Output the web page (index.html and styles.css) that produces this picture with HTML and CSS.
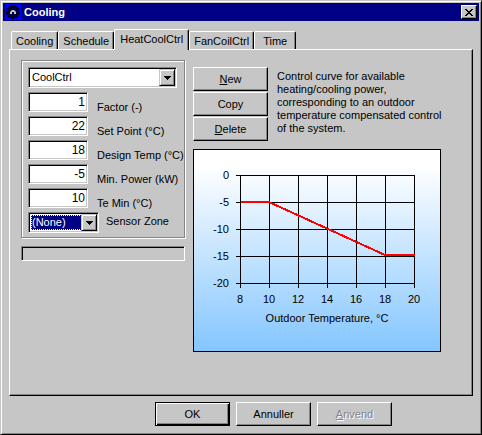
FILE: index.html
```
<!DOCTYPE html>
<html lang="en">
<head>
    <meta charset="UTF-8">
    <title>Cooling</title>
    <link rel="stylesheet" href="styles.css">
</head>

<body>
    <div class="window">
        <div class="title-bar">
            <svg class="app-icon" width="16" height="16" viewBox="0 0 16 16">
                <rect width="16" height="16" fill="#0000ff"/>
                <circle cx="8" cy="8" r="6" fill="#000042" stroke="#000000" stroke-width="2" stroke-dasharray="3 1"/>
                <path d="M5 10V8L7 6H9L11 8V10H9V8H7V10Z" fill="#c6c6c6"/>
            </svg>
            <h1>Cooling</h1>
            <button class="close" aria-label="Close">
                <svg width="8" height="7" viewBox="0 0 8 7" shape-rendering="crispEdges">
                    <path d="M0 0h2v1h1v1h2V1h1V0h2v1H7v1H6v1H5v1h1v1h1v1h1v1H6V6H5V5H3v1H2v1H0V6h1V5h1V4h1V3H2V2H1V1H0Z"/>
                </svg>
            </button>
        </div>

        <div class="tabs" role="tablist">
            <button class="tab" role="tab">Cooling</button>
            <button class="tab" role="tab">Schedule</button>
            <button class="tab active" role="tab" aria-selected="true">HeatCoolCtrl</button>
            <button class="tab" role="tab">FanCoilCtrl</button>
            <button class="tab" role="tab">Time</button>
        </div>

        <div class="panel" role="tabpanel">
            <div class="settings">
                <form class="group" onsubmit="event.preventDefault();">
                    <div class="combo">
                        <select id="controller" aria-label="Controller">
                            <option>CoolCtrl</option>
                        </select>
                        <span class="arrow"><svg width="7" height="4" viewBox="0 0 7 4" shape-rendering="crispEdges"><path d="M0 0h7v1H6v1H5v1H4v1H3V3H2V2H1V1H0Z"/></svg></span>
                    </div>
                    <div class="field">
                        <input type="text" id="factor" value="1">
                        <label for="factor">Factor (-)</label>
                    </div>
                    <div class="field">
                        <input type="text" id="set_point" value="22">
                        <label for="set_point">Set Point (°C)</label>
                    </div>
                    <div class="field">
                        <input type="text" id="design_temp" value="18">
                        <label for="design_temp">Design Temp (°C)</label>
                    </div>
                    <div class="field">
                        <input type="text" id="min_power" value="-5">
                        <label for="min_power">Min. Power (kW)</label>
                    </div>
                    <div class="field">
                        <input type="text" id="te_min" value="10">
                        <label for="te_min">Te Min (°C)</label>
                    </div>
                    <div class="sensor">
                        <div class="combo selected">
                            <select id="sensor_zone">
                                <option>(None)</option>
                            </select>
                            <span class="arrow"><svg width="7" height="4" viewBox="0 0 7 4" shape-rendering="crispEdges"><path d="M0 0h7v1H6v1H5v1H4v1H3V3H2V2H1V1H0Z"/></svg></span>
                        </div>
                        <label for="sensor_zone">Sensor Zone</label>
                    </div>
                </form>
                <div class="status"></div>
            </div>

            <div class="curve">
                <div class="top">
                    <div class="actions">
                        <button class="btn"><span><u>N</u>ew</span></button>
                        <button class="btn">Copy</button>
                        <button class="btn"><span><u>D</u>elete</span></button>
                    </div>
                    <p>Control curve for available<br>heating/cooling power,<br>corresponding to an outdoor<br>temperature compensated control<br>of the system.</p>
                </div>

                <svg class="chart" width="246" height="201" viewBox="0 0 246 201">
                    <!-- grid with tick marks -->
                    <g fill="none" stroke="#000000" shape-rendering="crispEdges">
                        <path d="M42 25.500H221M42 52.500H221M42 79.500H221M42 106.500H221M42 133.500H221"/>
                        <path d="M46.500 25V138M75.500 25V138M104.500 25V138M133.500 25V138M162.500 25V138M191.500 25V138M220.500 25V138"/>
                    </g>
                    <polyline points="47,52 75,52 191,105 221,105" fill="none" stroke="#ff0000" stroke-width="2" shape-rendering="crispEdges"/>
                    <g text-anchor="end">
                        <text x="35" y="29">0</text>
                        <text x="35" y="56">-5</text>
                        <text x="35" y="83">-10</text>
                        <text x="35" y="110">-15</text>
                        <text x="35" y="137">-20</text>
                    </g>
                    <g text-anchor="middle">
                        <text x="46" y="153">8</text>
                        <text x="75" y="153">10</text>
                        <text x="104" y="153">12</text>
                        <text x="133" y="153">14</text>
                        <text x="162" y="153">16</text>
                        <text x="191" y="153">18</text>
                        <text x="220" y="153">20</text>
                        <text x="133" y="172">Outdoor Temperature, °C</text>
                    </g>
                </svg>
            </div>
        </div>

        <div class="buttons">
            <button class="btn default">OK</button>
            <button class="btn">Annuller</button>
            <button class="btn" disabled><span><u>A</u>nvend</span></button>
        </div>
    </div>
</body>

</html>
```

FILE: styles.css
```
* {
    box-sizing: border-box;
}

body {
    margin: 0;
    font-family: "Liberation Sans", Arial, sans-serif;
    font-size: 11px;
    line-height: 13px;
    color: black;
    background-color: #c6c6c6;
}

button, input, select {
    font: inherit;
    color: inherit;
    margin: 0;
    border-radius: 0;
}

.window {
    display: flex;
    flex-direction: column;
    min-height: 100vh;
    padding: 2px;
    border: 1px solid;
    border-color: #c6c6c6 black black #c6c6c6;
    box-shadow: inset 1px 1px white, inset -1px -1px #848484;
}

/* Title bar */
.title-bar {
    display: flex;
    align-items: center;
    height: 18px;
    padding: 0 2px;
    background-color: #000084;
    color: white;
}

.title-bar h1 {
    flex: 1;
    margin: 0 3px;
    font-size: 11px;
    line-height: 16px;
}

.close {
    display: flex;
    align-items: center;
    justify-content: center;
    width: 16px;
    height: 14px;
    padding: 0;
    border: 1px solid;
    border-color: white black black white;
    background-color: #c6c6c6;
    box-shadow: inset -1px -1px #848484;
}

/* Tabs */
.tabs {
    display: flex;
    align-items: flex-end;
    height: 28px;
    padding-left: 8px;
}

.tab {
    min-width: 42px;
    height: 18px;
    padding: 1px 4px 0;
    border: 1px solid;
    border-color: white black transparent white;
    border-bottom: none;
    border-radius: 2px 2px 0 0;
    background-color: #c6c6c6;
    box-shadow: inset -1px 0 #848484;
    white-space: nowrap;
}

.tab.active {
    height: 21px;
    margin-bottom: -1px;
    padding: 0 5px 1px;
    z-index: 1;
}

/* Panel */
.panel {
    flex: 1;
    display: flex;
    gap: 8px;
    margin: 0 6px;
    padding: 10px 11px;
    border: 1px solid;
    border-color: white black black white;
    box-shadow: inset -1px -1px #848484;
}

.settings {
    width: 164px;
}

.group {
    padding: 6px 6px 4px;
    border: 1px solid #848484;
    box-shadow: inset 1px 1px white, 1px 1px white;
    white-space: nowrap;
}

.combo {
    display: grid;
    grid-template-columns: 1fr 16px;
    height: 21px;
    border: 1px solid;
    border-color: #848484 white white #848484;
    box-shadow: inset 1px 1px black, inset -1px -1px #c6c6c6;
    background-color: white;
    padding: 1px;
}

.combo select {
    grid-area: 1 / 1 / 2 / 3;
    appearance: none;
    width: 100%;
    padding: 0 16px 0 2px;
    border: none;
    background: none;
}

.arrow {
    grid-area: 1 / 2;
    display: flex;
    align-items: center;
    justify-content: center;
    border: 1px solid;
    border-color: #c6c6c6 black black #c6c6c6;
    box-shadow: inset 1px 1px white, inset -1px -1px #848484;
    background-color: #c6c6c6;
    pointer-events: none;
}

.group > .combo {
    width: 149px;
    margin-bottom: 4px;
}

.field {
    display: flex;
    align-items: flex-end;
    gap: 9px;
    margin-bottom: 4px;
}

.field input {
    width: 60px;
    height: 20px;
    padding: 0 2px 1px;
    border: 1px solid;
    border-color: #848484 white white #848484;
    background-color: white;
    box-shadow: inset 1px 1px black, inset -1px -1px #c6c6c6;
    font-size: 12px;
    text-align: right;
}

.field label {
    height: 11px;
}

.sensor {
    display: flex;
    gap: 7px;
}

.sensor .combo {
    width: 71px;
}

.sensor label {
    padding-top: 3px;
}

.selected select {
    width: 51px;
    margin: 1px;
    padding: 0 1px;
    background-color: #000084;
    color: white;
    outline: 1px dotted #ffff84;
    outline-offset: -1px;
}

.status {
    height: 15px;
    margin-top: 8px;
    border: 1px solid;
    border-color: #848484 white white #848484;
    box-shadow: inset 1px 1px black;
}

/* Buttons */
.btn {
    width: 75px;
    height: 24px;
    padding: 0;
    border: 1px solid;
    border-color: white black black white;
    background-color: #c6c6c6;
    box-shadow: inset -1px -1px #848484;
}

.btn.default {
    border-color: black;
    box-shadow: inset 1px 1px white, inset -1px -1px black, inset -2px -2px #848484;
}

.btn:disabled {
    color: #848484;
    text-shadow: 1px 1px white;
}

.curve {
    flex: 1;
    padding-top: 7px;
}

.top {
    display: flex;
    gap: 9px;
}

.actions {
    display: flex;
    flex-direction: column;
    gap: 1px;
}

.top p {
    margin: 3px 0 0;
    white-space: nowrap;
}

/* Chart */
.chart {
    display: block;
    box-sizing: content-box;
    margin-top: 8px;
    border: 1px solid black;
    background-image: linear-gradient(white 8%, #84c6ff);
    font-size: 11px;
}

.buttons {
    display: flex;
    justify-content: flex-end;
    gap: 6px;
    padding: 6px 87px 6px 0;
}
```
